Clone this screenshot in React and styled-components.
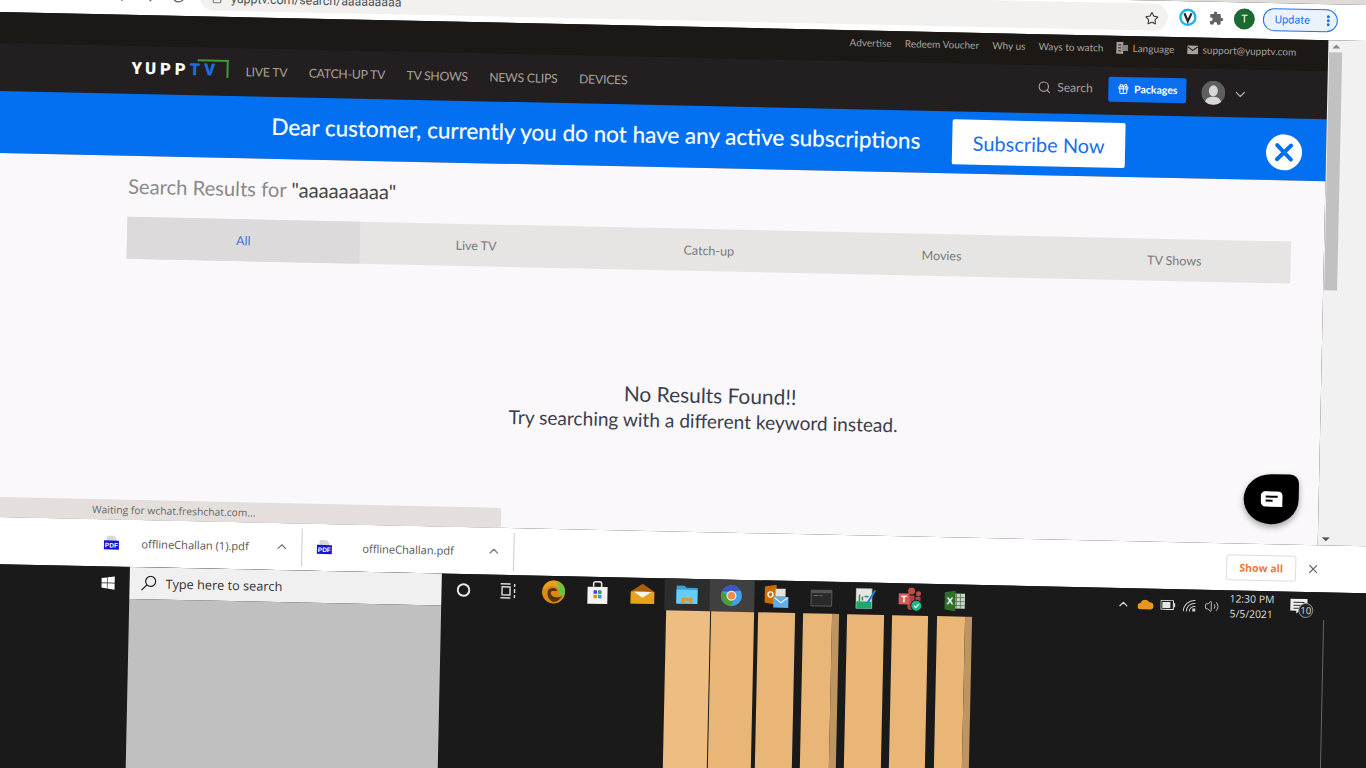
import React from "react";
import styled, { createGlobalStyle } from "styled-components";
import { ArrowLeft, ArrowRight, RotateCw, Star, Search, Gift, ChevronDown, ChevronUp, X, Lock, Volume2 } from "lucide-react";
import { FaWindows } from "react-icons/fa";

const Global = createGlobalStyle`
  html, body { margin: 0; padding: 0; background: #1a1a1a; overflow: hidden; }
  * { box-sizing: border-box; }
`;

const Viewport = styled.div`
  width: 1366px; height: 768px; overflow: hidden; background: #1a1a1a;
`;
const Stage = styled.div`
  width: 1400px; display: flex; flex-direction: column;
  transform-origin: 0 0; transform: rotate(1.22deg) translateY(-50px);
  font-family: Lato, "Liberation Sans", sans-serif;
`;
const TabStrip = styled.div`height: 26px; background: #dedbd9;`;
const Toolbar = styled.div`
  height: 36px; background: #fff; display: flex; align-items: flex-start; padding: 3px 0 0 108px; gap: 8px;
`;
const NavGroup = styled.div`display: flex; margin-top: 6px; color: #5f6368; margin-right: 0;`;
const NavBtn = styled.span`width: 28px; display: flex; justify-content: center;`;
const UrlPill = styled.div`
  width: 968px; height: 27px; background: #f2f1f0; border-radius: 14px; display: flex; align-items: center;
  padding: 2px 9px 0 12px; font: 12.3px Roboto, sans-serif; color: #4d5156; margin-right: 2px;
`;
const UrlText = styled.span`margin-left: 9px; flex: 1;`;
const ExtIcon = styled.span`width: 20px; height: 20px; display: flex; align-items: center; justify-content: center; margin-top: 3px;`;
const ProfileDot = styled.span`
  width: 21px; height: 21px; margin-top: 3px; border-radius: 50%; background: #1b6a30; color: #fff;
  display: flex; align-items: center; justify-content: center; font: 11px Roboto, sans-serif;
`;
const UpdateBtn = styled.div`
  width: 75px; height: 23px; margin-top: 2px; border: 1px solid #1a73e8; border-radius: 12px; background: #eaf2fd;
  color: #1a73e8; font: 11px Roboto, sans-serif; display: flex; align-items: center; justify-content: space-between; padding: 0 7px 0 11px;
`;
const Kebab = styled.span`
  width: 3px; height: 3px; border-radius: 50%; background: #1a73e8; box-shadow: 0 -4px 0 #1a73e8, 0 4px 0 #1a73e8;
`;

const Site = styled.div`height: 505px; display: flex;`;
const Main = styled.div`width: 1329px; display: flex; flex-direction: column;`;
const TopBar = styled.div`
  height: 31px; background: #1c1815; display: flex; align-items: flex-start; justify-content: flex-end; gap: 13.2px; padding: 6px 32px 0 0;
  font-size: 10px; line-height: 12px; color: #a8a29c;
`;
const TopLink = styled.span`display: flex; align-items: center; gap: 4px; white-space: nowrap;`;
const NavBar = styled.div`
  height: 48px; background: #231f20; display: flex; align-items: center; padding: 0 79px 2px 133px; color: #a8a29c;
`;
const Logo = styled.div`
  position: relative; width: 97px; height: 20px; display: flex; align-items: center; margin-top: -2px;
  font: 900 16.5px Roboto, sans-serif; letter-spacing: 4px; color: #fff; margin-right: 17px; white-space: nowrap;
`;
const LogoTv = styled.span`color: #1b6fe0;`;
const LogoCorner = styled.span`
  position: absolute; right: 0; top: 0; width: 31px; height: 18px; border-top: 2px solid #3f9a35; border-right: 2px solid #3f9a35;
`;
const NavLinks = styled.div`display: flex; gap: 21.5px; font-size: 12.2px; letter-spacing: -0.2px; white-space: nowrap;`;
const NavRight = styled.div`margin-left: auto; display: flex; align-items: center;`;
const SearchBit = styled.div`display: flex; align-items: center; gap: 6px; font-size: 12px; width: 71px; margin-top: -3px;`;
const PackagesBtn = styled.div`
  width: 78px; height: 25px; background: #0a6ef0; border-radius: 2px; color: #fff; font-size: 10.5px; font-weight: 700; margin-top: -2px;
  display: flex; align-items: center; justify-content: center; gap: 5px; margin-right: 15px;
`;
const Avatar = styled.span`width: 24px; height: 24px; display: block; margin: 1px 7px 0 0;`;
const ChevronSlot = styled.span`display: flex; margin-top: 3px;`;

const Banner = styled.div`
  height: 62px; background: #0270f0; display: flex; align-items: center; padding-left: 274px; color: #fff;
`;
const BannerText = styled.div`font-size: 22.5px; letter-spacing: 0; white-space: nowrap; width: 681px; margin-bottom: 3px; -webkit-text-stroke: 0.2px #fff;`;
const SubscribeBtn = styled.div`
  width: 173px; height: 45px; background: #fff; border-radius: 2px; color: #1a6fe8; font-size: 20px; margin-top: -1px;
  display: flex; align-items: center; justify-content: center;
`;
const CloseCircle = styled.div`
  width: 36px; height: 36px; border-radius: 50%; background: #fff; color: #0270f0; margin: 5px 0 0 141px;
  display: flex; align-items: center; justify-content: center;
`;
const Content = styled.div`
  position: relative; flex: 1; background: #faf8fa; padding: 20px 0 0 132px;
`;
const Heading = styled.div`font-size: 20.2px; line-height: 22px; color: #8a8a8a; white-space: nowrap; margin-top: -1px;`;
const Term = styled.span`color: #444;`;
const Tabs = styled.div`
  width: 1164px; height: 42px; margin-top: 20px; display: grid; grid-template-columns: repeat(5, 1fr); background: #e6e5e3;
`;
const TabItem = styled.div`
  display: flex; align-items: center; justify-content: center; font-size: 12.5px;
  background: ${p => (p.$active ? "#dcdada" : "transparent")}; color: ${p => (p.$active ? "#4470d8" : "#7a7a7a")};
`;
const NoResults = styled.div`
  width: 1164px; margin-top: 111px; text-align: center; color: #3b3f4c; font-size: 19.1px; line-height: 26px;
`;
const NoTitle = styled.div`padding-left: 9px; font-size: 20.9px;`;
const NoHint = styled.div`padding-right: 4px;`;
const StatusBubble = styled.div`
  position: absolute; left: 0; bottom: 0; width: 512px; height: 20px; background: #e4dfdc; border-radius: 0 4px 0 0;
  padding: 2px 0 0 103px; font: 10.3px "Open Sans", sans-serif; color: #666; line-height: 16px;
`;
const ChatBubble = styled.div`
  position: absolute; right: 20px; bottom: 20px; width: 55px; height: 50px; background: #000;
  border-radius: 50% 9px 50% 50%; box-shadow: 0 3px 6px rgba(0,0,0,.35);
  display: flex; align-items: center; justify-content: center;
`;
const ScrollTrack = styled.div`
  flex: 1; background: #f2f1f1; display: flex; flex-direction: column; align-items: flex-start; padding: 4px 0 4px 1px;
`;
const ArrowUp = styled.span`
  margin-left: 3px; width: 0; height: 0; border-left: 4px solid transparent; border-right: 4px solid transparent; border-bottom: 4px solid #888;
`;
const ArrowDown = styled(ArrowUp)`
  margin-top: auto; border-bottom: 0; border-top: 4px solid #555;
`;
const Thumb = styled.div`width: 13px; height: 238px; margin-top: 4px; background: #c1c1c1;`;

const Downloads = styled.div`
  height: 47px; background: #fff; display: flex; align-items: center; padding: 0 68px 0 113px;
  font: 11.1px "Open Sans", sans-serif; color: #555;
`;
const DownloadItem = styled.div`
  width: ${p => p.$w}px; height: 38px; display: flex; align-items: center; border-right: 1px solid #ccc; padding-left: ${p => p.$pad}px; padding-right: 12px;
`;
const FileName = styled.span`margin-left: ${p => p.$gap}px; white-space: nowrap;`;
const ChevronWrap = styled.span`margin-left: auto; display: flex; color: #777;`;
const ShowAll = styled.div`
  margin-left: auto; width: 70px; height: 26px; border: 1px solid #ddd; border-radius: 3px; color: #e87a3c; font-weight: 700; font-size: 10.5px;
  display: flex; align-items: center; justify-content: center;
`;
const CloseBar = styled.span`margin-left: 10px; width: 14px; display: flex; justify-content: center; color: #666;`;

const Lower = styled.div`position: relative;`;
const MonitorLine = styled.span`position: absolute; left: 1336px; top: 28px; bottom: 0; width: 1px; background: #666;`;
const Taskbar = styled.div`height: 32px; background: #1a1a1a; display: flex; align-items: center; padding-right: 70px;`;
const WinCell = styled.div`width: 142px; display: flex; justify-content: flex-end; padding-right: 14px; color: #fff;`;
const SearchBox = styled.div`
  width: 312px; height: 32px; background: #f0f0f0; display: flex; align-items: center; gap: 9px; padding: 0 0 0 11px;
  font: 12.7px "Open Sans", sans-serif; color: #333;
`;
const TaskIcon = styled.div`
  width: 44.7px; height: 32px; display: flex; align-items: center; justify-content: center;
  background: ${p => p.$bg || "transparent"};
`;
const Tray = styled.div`margin-left: auto; display: flex; align-items: center; color: #e4e4e4;`;
const TrayIcon = styled.span`width: 22px; display: flex; justify-content: center;`;
const Clock = styled.div`
  width: 44px; margin-left: 7px; text-align: center; font: 10.4px/15px "Open Sans", sans-serif; color: #ddd; white-space: nowrap;
`;
const Notif = styled.div`position: relative; width: 28px; height: 20px; margin-left: 16px;`;
const NotifBadge = styled.span`
  position: absolute; left: 9px; top: 5px; width: 15px; height: 15px; border-radius: 50%; background: #222; border: 1px solid #888;
  color: #ddd; font: 9.5px/13px "Open Sans", sans-serif; text-align: center;
`;
const Desktop = styled.div`height: 210px; display: flex; padding-left: 142px;`;
const GreyPanel = styled.div`width: 312px; background: #c0c0c0;`;
const Bars = styled.div`display: flex; margin-left: 225px;`;
const Bar = styled.div`
  width: ${p => p.$w}px; margin-left: ${p => p.$m}px; background: ${p => p.$c};
`;
const BarSide = styled.span`width: 7px; background: #bd9560;`;

const PdfIcon = () => (
  <svg width="16" height="16" viewBox="0 0 16 16">
    <path d="M4 0h6l3 3v5H3V1z" fill="#d8d8d8" />
    <rect x="0.5" y="5" width="15" height="9" fill="#1212d8" />
    <text x="8" y="12" fontSize="6.5" fontWeight="700" textAnchor="middle" fill="#fff" fontFamily="Liberation Sans">PDF</text>
  </svg>
);
const Edge = () => (
  <svg width="24" height="24" viewBox="0 0 24 24">
    <circle cx="12" cy="12" r="11.5" fill="#d98a12" />
    <path d="M12 .5c6 0 11.5 4 11.5 10.5 0 3-2 4-4 4-2.5 0-2-2-2-3.5C17.5 8 14.5 6 11 6S4 8 2 11C2 5 6 .5 12 .5z" fill="#e8a01c" />
    <path d="M15 2c4 1 8.500 5 8.500 9.500 0 2.500-2 3.500-4 3.500-1.500 0-2.500-1-2-3 .3-2-1-5-2.500-10z" fill="#5fc74e" />
    <path d="M6 13c0-4 3-5 6-5 2.500 0 3.500 1.500 3.500 3H11c-2 0-2.500 3 0 5 3 2 7 1.500 9.500 0C18 21 14 22.500 12 22c-3-.5-6-4-6-9z" fill="#5a3208" />
  </svg>
);
const Store = () => (
  <svg width="22" height="24" viewBox="0 0 22 24">
    <path d="M7 6V3a2 2 0 0 1 2-2h4a2 2 0 0 1 2 2v3" stroke="#ddd" strokeWidth="1.6" fill="none" />
    <rect x="1" y="6" width="20" height="17" fill="#f4f4f4" />
    <rect x="7" y="9.500" width="3.500" height="3.500" fill="#2b4ee0" />
    <rect x="11.500" y="9.500" width="3.500" height="3.500" fill="#1aa36b" />
    <rect x="7" y="14" width="3.500" height="3.500" fill="#f09000" />
    <rect x="11.500" y="14" width="3.500" height="3.500" fill="#16a7e8" />
  </svg>
);
const Mail = () => (
  <svg width="24" height="22" viewBox="0 0 24 22">
    <path d="M0 9 12 1l12 8v12H0z" fill="#a85f08" />
    <path d="M0 9h24v12H0z" fill="#e8a31a" />
    <path d="M3 9h18l-9 6z" fill="#f8f4ea" />
  </svg>
);
const Explorer = () => (
  <svg width="23" height="20" viewBox="0 0 23 20">
    <path d="M1 1h8l2 2h11v16H1z" fill="#3aa0dc" />
    <path d="M1 5h21v14H1z" fill="#66cdf4" />
    <path d="M6 13h11v6h-3v-3H9v3H6z" fill="#d99a30" />
  </svg>
);
const Chrome = () => (
  <svg width="22" height="22" viewBox="0 0 22 22">
    <circle cx="11" cy="11" r="10.500" fill="#3ea2e8" />
    <path d="M1.500 7A10.500 10.500 0 0 1 20 5.500L11 7z" fill="#3d55c8" />
    <path d="M1.500 7A10.500 10.500 0 0 0 11 21.500L13 15z" fill="#4f9a3a" />
    <circle cx="11" cy="11" r="5" fill="#e8eef4" />
    <circle cx="11" cy="11" r="3.800" fill="#ef8a52" />
  </svg>
);
const Outlook = () => (
  <svg width="25" height="24" viewBox="0 0 25 24">
    <path d="M0 2l12-2v20L0 18z" fill="#c96c04" />
    <rect x="11" y="4" width="10" height="8" fill="#e9e2d6" />
    <text x="6" y="13" fontSize="9" fontWeight="700" textAnchor="middle" fill="#fff" fontFamily="Liberation Sans">O</text>
    <rect x="9" y="12" width="15" height="11" fill="#62aee8" />
    <path d="M10 13l6.500 5 6.500-5" stroke="#e8f2fa" strokeWidth="1.200" fill="none" />
  </svg>
);
const Terminal = () => (
  <svg width="22" height="17" viewBox="0 0 22 17">
    <rect x=".5" y=".5" width="21" height="16" rx="1" fill="#2a2a2a" stroke="#6a6a6a" />
    <rect x="1" y="1" width="20" height="2.500" fill="#555" />
    <path d="M3 6h5M9 6h3" stroke="#666" strokeWidth="1" />
  </svg>
);
const Notepad = () => (
  <svg width="21" height="22" viewBox="0 0 21 22">
    <rect x="0.500" y="1" width="16" height="20" fill="#e6e6e6" stroke="#999" strokeWidth=".6" />
    <rect x="1" y="14" width="15" height="7" fill="#1ea868" />
    <path d="M4 7v7M7 9v4M9 9h4" stroke="#3d8f60" strokeWidth="1.600" />
    <path d="M11 15 19 2l1.500 1L13 16z" fill="#1c86d8" />
  </svg>
);
const Teams = () => (
  <svg width="24" height="24" viewBox="0 0 24 24">
    <circle cx="13" cy="3.500" r="3.500" fill="#c24a4a" />
    <circle cx="20" cy="6" r="2.500" fill="#c24a4a" />
    <path d="M9 8h7v11a3 3 0 0 1-7 0zM17 9h5v7h-5z" fill="#b54242" />
    <rect x="0" y="6" width="11" height="11" fill="#d0605e" />
    <text x="5.500" y="15" fontSize="9.500" fontWeight="700" textAnchor="middle" fill="#fff" fontFamily="Liberation Sans">T</text>
    <circle cx="18" cy="18" r="5.500" fill="#1bb98a" stroke="#222" />
    <path d="M15.500 18l2 2 3-3.500" stroke="#fff" strokeWidth="1.200" fill="none" />
  </svg>
);
const Excel = () => (
  <svg width="21" height="21" viewBox="0 0 21 21">
    <rect x="9" y="3" width="11.500" height="15" fill="#c9d6c9" />
    <path d="M12 3v15M16 3v15M9 7h11M9 11h11M9 15h11" stroke="#4d7a50" strokeWidth=".8" />
    <path d="M0 2l11-2v21l-11-2z" fill="#2e6e2a" />
    <text x="5.500" y="14" fontSize="10" fontWeight="700" textAnchor="middle" fill="#fff" fontFamily="Liberation Sans">X</text>
  </svg>
);
const TaskView = () => (
  <svg width="18" height="16" viewBox="0 0 18 16" fill="none" stroke="#ddd" strokeWidth="1.400">
    <path d="M1 1h10M1 15h10" />
    <rect x="2.500" y="4" width="8" height="8" />
    <path d="M15 1v3M15 6v4M15 12v3" />
  </svg>
);
const Vpn = () => (
  <svg width="18" height="18" viewBox="0 0 18 18">
    <circle cx="9" cy="9" r="7.500" fill="#fff" stroke="#1bb4ea" strokeWidth="2.400" />
    <path d="M5.500 5 9 13l3.500-8" stroke="#223" strokeWidth="2.200" fill="none" />
  </svg>
);
const PuzzleIcon = () => (
  <svg width="15" height="15" viewBox="0 0 24 24" fill="#5f6368">
    <path d="M20.500 11H19V7a2 2 0 0 0-2-2h-4V3.500a2.500 2.500 0 0 0-5 0V5H4a2 2 0 0 0-2 2v3.800h1.500a2.700 2.700 0 0 1 0 5.400H2V20a2 2 0 0 0 2 2h3.800v-1.500a2.700 2.700 0 0 1 5.400 0V22H17a2 2 0 0 0 2-2v-4h1.500a2.500 2.500 0 0 0 0-5z" />
  </svg>
);
const LangIcon = () => (
  <svg width="12" height="12" viewBox="0 0 12 12">
    <rect x="0" y="0" width="7" height="12" fill="#a8a29c" />
    <rect x="6" y="3" width="6" height="6" fill="#8a847e" />
    <path d="M2 3h3M2 6h3M2 9h3" stroke="#231f20" />
  </svg>
);
const MailGlyph = () => (
  <svg width="11" height="9" viewBox="0 0 11 9">
    <rect width="11" height="9" rx="1" fill="#a8a29c" />
    <path d="M.5 1.500 5.500 5l5-3.500" stroke="#1c1815" fill="none" />
  </svg>
);
const AvatarGlyph = () => (
  <svg width="24" height="24" viewBox="0 0 24 24">
    <circle cx="12" cy="12" r="12" fill="#5f5f5f" />
    <ellipse cx="12" cy="10" rx="4.500" ry="5.500" fill="#d8d8d8" />
    <path d="M4 21c1-4 5-5 8-5s7 1 8 5a12 12 0 0 1-16 0z" fill="#d8d8d8" />
  </svg>
);
const ChatGlyph = () => (
  <svg width="22" height="16" viewBox="0 0 22 16">
    <path d="M5 0h12a5 5 0 0 1 5 5v10.500H5a5 5 0 0 1-5-5V5a5 5 0 0 1 5-5z" fill="#fff" />
    <path d="M5 5.500h12M5 9.500h7" stroke="#000" strokeWidth="2" />
  </svg>
);
const Cloud = () => (
  <svg width="17" height="10" viewBox="0 0 17 10">
    <path d="M3.500 10a3.200 3.200 0 0 1-.3-6.400A4.800 4.800 0 0 1 12 2.600 3.800 3.800 0 0 1 13.500 10z" fill="#e8961c" />
  </svg>
);
const Battery = () => (
  <svg width="15" height="10" viewBox="0 0 15 10">
    <rect x=".5" y=".5" width="12.500" height="9" fill="none" stroke="#e4e4e4" />
    <rect x="2" y="2" width="8" height="6" fill="#e4e4e4" />
    <rect x="13.500" y="3" width="1.500" height="4" fill="#e4e4e4" />
  </svg>
);
const Wifi = () => (
  <svg width="14" height="13" viewBox="0 0 14 13" fill="none" stroke="#ccc" strokeWidth="1">
    <path d="M1 12A11 11 0 0 1 13 1M4 12a8 8 0 0 1 9-8M7 12a5 5 0 0 1 6-5" />
    <rect x="10" y="9" width="3" height="3" fill="#ccc" stroke="none" />
  </svg>
);
const NotifGlyph = () => (
  <svg width="19" height="15" viewBox="0 0 17 15">
    <path d="M0 0h17v12H9l-3 3v-3H0z" fill="#eee" />
    <path d="M3 3.500h11M3 6.500h11M3 9.500h7" stroke="#333" strokeWidth="1" />
  </svg>
);
const Magnifier = () => (
  <svg width="16" height="16" viewBox="0 0 16 16" fill="none" stroke="#222" strokeWidth="1.200">
    <circle cx="10" cy="6" r="5" />
    <path d="M6.500 9.500 1 15" />
  </svg>
);
const Circle = () => (
  <svg width="14" height="14" viewBox="0 0 14 14"><circle cx="7" cy="7" r="5.800" fill="none" stroke="#e8e8e8" strokeWidth="2" /></svg>
);

const tabs = ["All", "Live TV", "Catch-up", "Movies", "TV Shows"];
const navs = ["LIVE TV", "CATCH-UP TV", "TV SHOWS", "NEWS CLIPS", "DEVICES"];
const links = ["Advertise", "Redeem Voucher", "Why us", "Ways to watch"];
const bars = [
  { w: 44, m: 0, c: "#edbd82" },
  { w: 43, m: 1, c: "#e9b677" },
  { w: 37, m: 4, c: "#e9b677" },
  { w: 29, m: 8, c: "#e9b677", side: true },
  { w: 37, m: 8, c: "#e9b677" },
  { w: 36, m: 8, c: "#e9b677" },
  { w: 28, m: 9, c: "#e9b677", side: true },
];

export default function App() {
  return (
    <Viewport>
      <Global />
      <Stage>
        <TabStrip />
        <Toolbar>
          <NavGroup>
            <NavBtn><ArrowLeft size={16} /></NavBtn>
            <NavBtn><ArrowRight size={16} /></NavBtn>
            <NavBtn><RotateCw size={15} /></NavBtn>
          </NavGroup>
          <UrlPill>
            <Lock size={10} />
            <UrlText>yupptv.com/search/aaaaaaaaa</UrlText>
            <Star size={14} color="#444" />
          </UrlPill>
          <ExtIcon><Vpn /></ExtIcon>
          <ExtIcon><PuzzleIcon /></ExtIcon>
          <ProfileDot>T</ProfileDot>
          <UpdateBtn>Update<Kebab /></UpdateBtn>
        </Toolbar>
        <Site>
          <Main>
            <TopBar>
              {links.map(l => <TopLink key={l}>{l}</TopLink>)}
              <TopLink><LangIcon />Language</TopLink>
              <TopLink><MailGlyph />support@yupptv.com</TopLink>
            </TopBar>
            <NavBar>
              <Logo>YUPP<LogoTv>TV</LogoTv><LogoCorner /></Logo>
              <NavLinks>{navs.map(n => <span key={n}>{n}</span>)}</NavLinks>
              <NavRight>
                <SearchBit><Search size={14} />Search</SearchBit>
                <PackagesBtn><Gift size={12} />Packages</PackagesBtn>
                <Avatar><AvatarGlyph /></Avatar>
                <ChevronSlot><ChevronDown size={16} /></ChevronSlot>
              </NavRight>
            </NavBar>
            <Banner>
              <BannerText>Dear customer, currently you do not have any active subscriptions</BannerText>
              <SubscribeBtn>Subscribe Now</SubscribeBtn>
              <CloseCircle><X size={28} strokeWidth={3.4} /></CloseCircle>
            </Banner>
            <Content>
              <Heading>Search Results for <Term>"aaaaaaaaa"</Term></Heading>
              <Tabs>
                {tabs.map((t, i) => <TabItem key={t} $active={i === 0}>{t}</TabItem>)}
              </Tabs>
              <NoResults>
                <NoTitle>No Results Found!!</NoTitle>
                <NoHint>Try searching with a different keyword instead.</NoHint>
              </NoResults>
              <StatusBubble>Waiting for wchat.freshchat.com...</StatusBubble>
              <ChatBubble><ChatGlyph /></ChatBubble>
            </Content>
          </Main>
          <ScrollTrack>
            <ArrowUp />
            <Thumb />
            <ArrowDown />
          </ScrollTrack>
        </Site>
        <Downloads>
          <DownloadItem $w={201} $pad={2}>
            <PdfIcon />
            <FileName $gap={22}>offlineChallan (1).pdf</FileName>
            <ChevronWrap><ChevronUp size={15} /></ChevronWrap>
          </DownloadItem>
          <DownloadItem $w={212} $pad={14}>
            <PdfIcon />
            <FileName $gap={30}>offlineChallan.pdf</FileName>
            <ChevronWrap><ChevronUp size={15} /></ChevronWrap>
          </DownloadItem>
          <ShowAll>Show all</ShowAll>
          <CloseBar><X size={14} /></CloseBar>
        </Downloads>
        <Lower>
          <MonitorLine />
          <Taskbar>
            <WinCell><FaWindows size={15} /></WinCell>
            <SearchBox><Magnifier />Type here to search</SearchBox>
            <TaskIcon><Circle /></TaskIcon>
            <TaskIcon><TaskView /></TaskIcon>
            <TaskIcon><Edge /></TaskIcon>
            <TaskIcon><Store /></TaskIcon>
            <TaskIcon><Mail /></TaskIcon>
            <TaskIcon $bg="#2d2d2d"><Explorer /></TaskIcon>
            <TaskIcon $bg="#404040"><Chrome /></TaskIcon>
            <TaskIcon><Outlook /></TaskIcon>
            <TaskIcon><Terminal /></TaskIcon>
            <TaskIcon><Notepad /></TaskIcon>
            <TaskIcon><Teams /></TaskIcon>
            <TaskIcon><Excel /></TaskIcon>
            <Tray>
              <TrayIcon><ChevronUp size={14} /></TrayIcon>
              <TrayIcon><Cloud /></TrayIcon>
              <TrayIcon><Battery /></TrayIcon>
              <TrayIcon><Wifi /></TrayIcon>
              <TrayIcon><Volume2 size={15} strokeWidth={1.3} /></TrayIcon>
              <Clock><div>12:30 PM</div><div>5/5/2021</div></Clock>
              <Notif><NotifGlyph /><NotifBadge>10</NotifBadge></Notif>
            </Tray>
          </Taskbar>
          <Desktop>
            <GreyPanel />
            <Bars>
              {bars.map((b, i) => (
                <React.Fragment key={i}>
                  <Bar $w={b.w} $m={b.m} $c={b.c} />
                  {b.side && <BarSide />}
                </React.Fragment>
              ))}
            </Bars>
          </Desktop>
        </Lower>
      </Stage>
    </Viewport>
  );
}
